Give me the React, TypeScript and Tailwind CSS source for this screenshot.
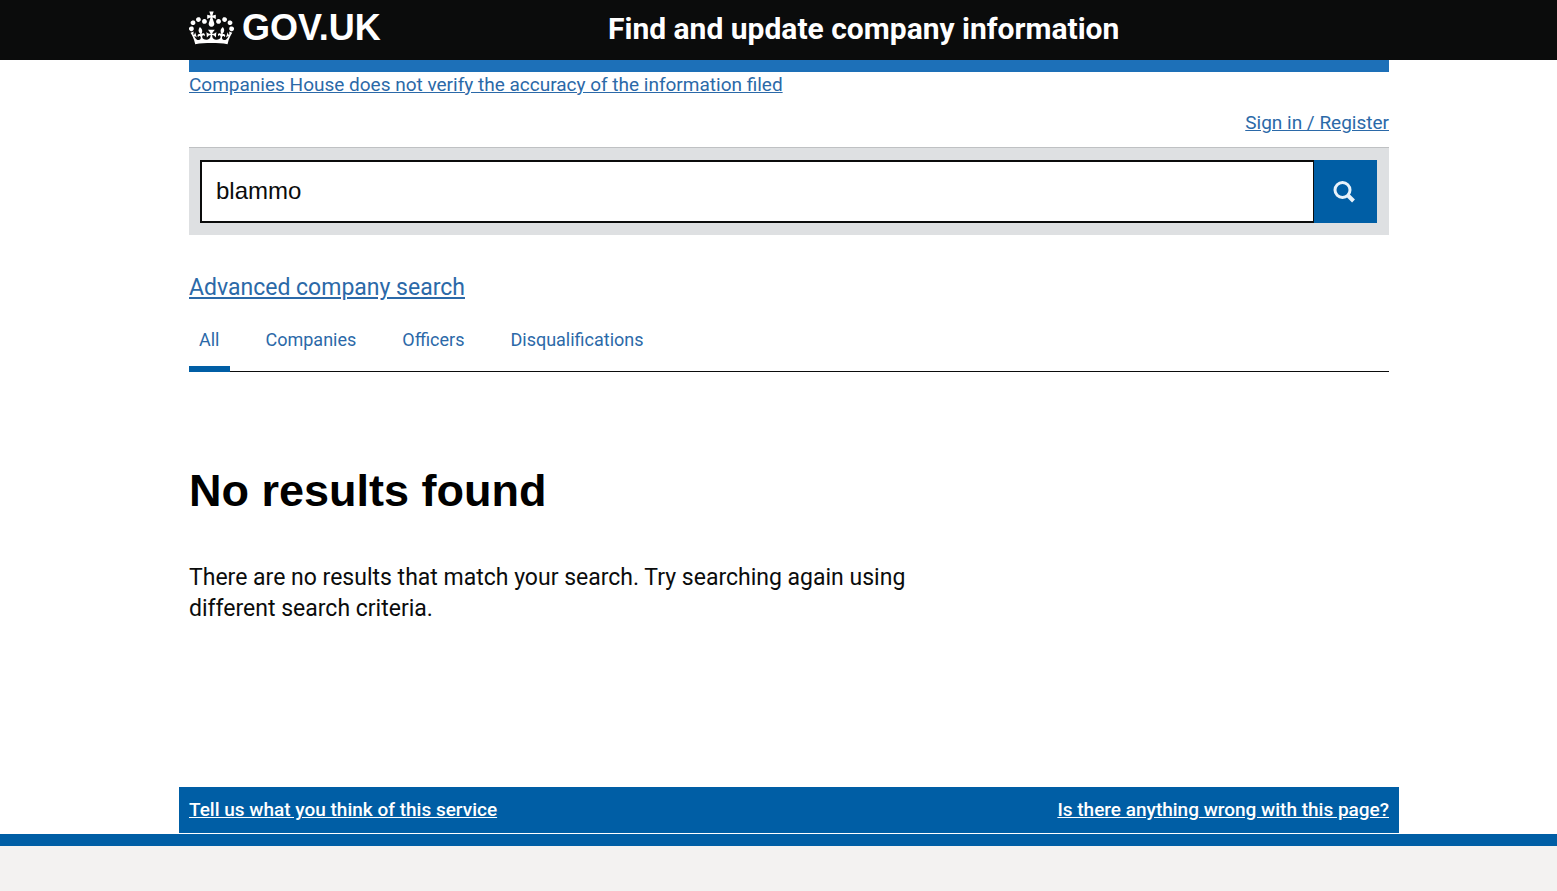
import { useState } from 'react';

const tabs = ['All', 'Companies', 'Officers', 'Disqualifications'];

function Crown() {
  return (
    <svg aria-hidden="true" viewBox="0 0 132 97" width="45" height="34" fill="currentColor">
      <path
        fillRule="evenodd"
        d="M25 30.2c3.5 1.5 7.7-.2 9.1-3.7 1.5-3.6-.2-7.8-3.9-9.2-3.6-1.4-7.6.3-9.1 3.9-1.4 3.5.3 7.5 3.9 9zM9 39.5c3.6 1.5 7.8-.2 9.2-3.7 1.5-3.6-.2-7.8-3.9-9.1-3.6-1.5-7.6.2-9.1 3.8-1.4 3.5.3 7.5 3.8 9zM4.4 57.2c3.5 1.5 7.7-.2 9.1-3.8 1.5-3.6-.2-7.7-3.9-9.1-3.5-1.5-7.6.3-9.1 3.8-1.4 3.5.3 7.6 3.9 9.1zm38.3-21.4c3.5 1.5 7.7-.2 9.1-3.8 1.5-3.6-.2-7.7-3.9-9.1-3.6-1.5-7.6.3-9.1 3.8-1.3 3.6.4 7.7 3.9 9.1zm64.4-5.6c-3.6 1.5-7.8-.2-9.1-3.7-1.5-3.6.2-7.8 3.8-9.2 3.6-1.4 7.7.3 9.2 3.9 1.3 3.5-.4 7.5-3.9 9zm15.9 9.3c-3.6 1.5-7.7-.2-9.1-3.7-1.5-3.6.2-7.8 3.7-9.1 3.6-1.5 7.7.2 9.2 3.8 1.5 3.5-.3 7.5-3.8 9zm4.7 17.7c-3.6 1.5-7.8-.2-9.2-3.8-1.5-3.6.2-7.7 3.9-9.1 3.6-1.5 7.7.3 9.2 3.8 1.3 3.5-.4 7.6-3.9 9.1zM89.3 35.8c-3.6 1.5-7.8-.2-9.2-3.8-1.4-3.6.2-7.7 3.9-9.1 3.6-1.5 7.7.3 9.2 3.8 1.4 3.6-.3 7.7-3.9 9.1zM69.7 17.7l8.9 4.7V9.3l-8.9 2.8c-.2-.3-.5-.6-.9-.9L72.4 0H59.6l3.5 11.2c-.3.3-.6.5-.9.9l-8.8-2.8v13.1l8.8-4.7c.3.3.6.7.9.9l-5 15.4v.1c-.2.8-.4 1.6-.4 2.4 0 4.1 3.1 7.5 7 8.1h.2c.3 0 .7.1 1 .1.4 0 .7 0 1-.1h.2c4-.6 7.1-4.1 7.1-8.1 0-.8-.1-1.7-.4-2.4V34l-5.1-15.4c.4-.2.7-.6 1-.9zM66 92.8c16.9 0 32.8 1.1 47.1 3.2 4-16.9 8.9-26.7 14-33.5l-9.6-3.4c1 4.9 1.1 7.2 0 10.2-1.5-1.4-3-4.3-4.2-8.7L108.6 76c2.8-2 5-3.2 7.5-3.3-4.4 9.4-10 11.9-13.6 11.2-4.3-.8-6.3-4.6-5.6-7.9 1-4.7 5.7-5.9 8-.5 4.3-8.7-3-11.4-7.6-8.8 7.1-7.2 7.9-13.5 2.1-21.1-8 6.1-8.1 12.3-4.5 20.8-4.7-5.4-12.1-2.5-9.5 6.2 3.4-5.2 7.9-2 7.2 3.1-.6 4.3-6.4 7.8-13.5 7.2-10.3-.9-10.9-8-11.2-13.8 2.5-.5 7.1 1.8 11 7.3L80.2 60c-4.1 4.4-8 5.3-12.3 5.4 1.4-4.4 8-11.6 8-11.6H55.5s6.4 7.2 7.9 11.6c-4.2-.1-8-1-12.3-5.4l1.4 16.4c3.9-5.5 8.5-7.7 10.9-7.3-.3 5.8-.9 12.8-11.1 13.8-7.2.6-12.9-2.9-13.5-7.2-.7-5 3.8-8.3 7.1-3.1 2.7-8.7-4.6-11.6-9.4-6.2 3.7-8.5 3.6-14.7-4.6-20.8-5.8 7.6-5 13.9 2.2 21.1-4.7-2.6-11.9.1-7.7 8.8 2.3-5.5 7.1-4.2 8.1.5.7 3.3-1.3 7.1-5.7 7.9-3.5.7-9-1.8-13.5-11.2 2.5.1 4.7 1.3 7.5 3.3l-4.7-15.4c-1.2 4.4-2.7 7.2-4.3 8.7-1.1-3-.9-5.3 0-10.2l-9.5 3.4c5 6.9 9.9 16.7 14 33.5 14.8-2.1 30.8-3.2 47.7-3.2z"
      />
    </svg>
  );
}

function SearchForm() {
  const [query, setQuery] = useState('blammo');

  return (
    <form
      role="search"
      onSubmit={(e) => e.preventDefault()}
      className="mt-3 flex border-t border-[#bfc1c3] bg-[#dee0e2] py-3 pr-3 pl-[11px]"
    >
      <input
        type="text"
        aria-label="Search companies"
        value={query}
        onChange={(e) => setQuery(e.target.value)}
        className="h-[63px] min-w-0 flex-1 border-2 border-r border-[#0b0c0c] bg-white px-3.5 pb-0.5 font-['Liberation_Sans',sans-serif] text-2xl outline-none"
      />
      <button
        type="submit"
        aria-label="Search"
        className="flex h-[63px] w-[63px] items-center justify-center bg-[#005ea5] pr-1 text-[#e8f2fa]"
      >
        <svg aria-hidden="true" width="22" height="22" viewBox="0 0 22 22" fill="none" stroke="currentColor" strokeWidth="3">
          <circle cx="9.5" cy="9" r="7.5" />
          <path d="M14.5 14l6 6" strokeWidth="4" />
        </svg>
      </button>
    </form>
  );
}

export default function App() {
  const [activeTab, setActiveTab] = useState('All');

  return (
    <div className="min-h-screen bg-white font-['Roboto',sans-serif] text-[#0b0c0c]">
      <header className="bg-[#0b0c0c] pl-[21px] text-white">
        <div className="mx-auto flex h-[60px] max-w-[1200px] items-start">
          <a href="#" className="flex w-[419px] items-center gap-2 pt-2 text-[36px] leading-10 font-bold font-['Liberation_Sans',sans-serif]">
            <Crown />
            <span>GOV.UK</span>
          </a>
          <a href="#" className="pt-2 text-[30px] leading-[42px] font-bold">
            Find and update company information
          </a>
        </div>
      </header>

      <div className="pl-[21px]">
        <div className="mx-auto max-w-[1200px]">
          <div className="h-3 bg-[#1d70b8]" />
          <a href="#" className="block w-fit text-[19px] leading-[25px] text-[#2b69a8] underline">
            Companies House does not verify the accuracy of the information filed
          </a>
          <div className="mt-[13px] flex justify-end text-[19px] leading-[25px]">
            <a href="#" className="text-[#2b69a8] underline">Sign in / Register</a>
          </div>

          <SearchForm />

          <main>
            <a href="#" className="mt-[38px] block w-fit text-[23px] leading-[30px] text-[#2b69a8] underline">
              Advanced company search
            </a>

            <nav className="mt-[22px] flex gap-[26px] border-b border-[#0b0c0c]">
              {tabs.map((tab) => (
                <a
                  key={tab}
                  href="#"
                  onClick={() => setActiveTab(tab)}
                  className={`-mb-px px-2.5 pb-[11px] text-lg leading-[30px] text-[#2b69a8] ${
                    activeTab === tab ? 'border-b-6 border-[#005ea5]' : ''
                  }`}
                >
                  {tab}
                </a>
              ))}
            </nav>

            <h1 className="mt-[91px] font-['Liberation_Sans',sans-serif] text-[45px] leading-[56px] font-bold text-black">
              No results found
            </h1>
            <p className="mt-[43px] max-w-[740px] text-[23px] leading-[31px]">
              There are no results that match your search. Try searching again using different search criteria.
            </p>
          </main>

          <div className="-mx-2.5 mt-[163px] flex justify-between bg-[#005ea5] px-2.5 pt-2.5 pb-[11px] text-[19px] leading-[25px] font-medium text-white">
            <a href="#" className="underline">Tell us what you think of this service</a>
            <a href="#" className="underline">Is there anything wrong with this page?</a>
          </div>
        </div>
      </div>

      <footer className="mt-px h-[57px] border-t-12 border-[#005ea5] bg-[#f3f2f1]" />
    </div>
  );
}
